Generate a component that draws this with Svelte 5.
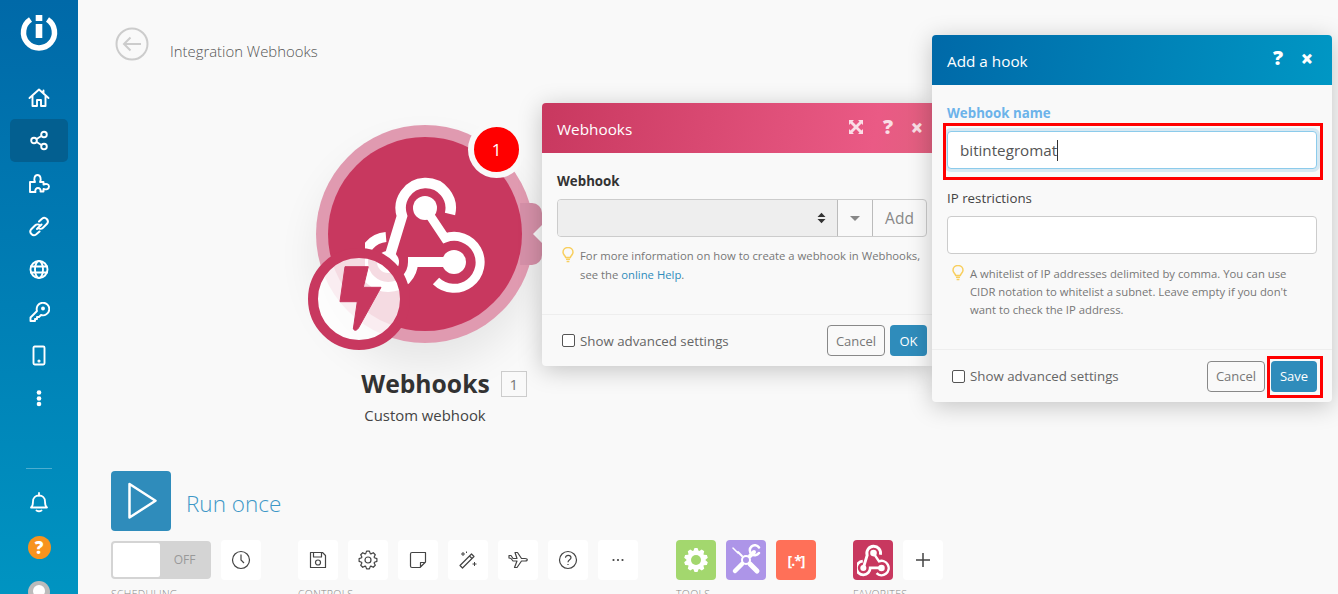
<script>
  const navItems = ['home', 'share', 'puzzle', 'link', 'globe', 'key', 'phone', 'more']

  function gearPath(cx, cy, outer, inner, teeth) {
    const pts = []
    const step = (Math.PI * 2) / teeth
    for (let i = 0; i < teeth; i++) {
      const a = i * step
      const w = step * 0.2
      pts.push([a - step / 2 + w * 0.3, inner], [a - w, outer], [a + w, outer], [a + step / 2 - w * 0.3, inner])
    }
    return 'M' + pts.map(([a, r]) => `${(cx + Math.sin(a) * r).toFixed(2)} ${(cy - Math.cos(a) * r).toFixed(2)}`).join('L') + 'Z'
  }

  const controls = ['save', 'gear', 'note', 'wand', 'plane', 'help', 'dots']
</script>

<svelte:head>
  <title>Integration Webhooks</title>
</svelte:head>

<svg class="defs" width="0" height="0" aria-hidden="true">
  <symbol id="webhook" viewBox="0 0 120 120">
    <g fill="none" stroke="currentColor">
      <path d="M85 39A25 25 0 1 0 37 41L23 87" stroke-width="10.500" />
      <path d="M71 106A26 26 0 1 0 80 63L60 33" stroke-width="9" />
      <path d="M21 62A25 25 0 1 0 48 87H89" stroke-width="10" />
    </g>
    <circle cx="60" cy="33" r="12" fill="currentColor" />
    <circle cx="89" cy="87" r="12" fill="currentColor" />
    <circle cx="23" cy="87" r="11" fill="currentColor" />
  </symbol>
  <symbol id="bulb" viewBox="0 0 12 16">
    <path d="M3.700 10.500C3.400 8.800 1 7.800 1 5.200A5 4.700 0 0 1 11 5.200C11 7.800 8.600 8.800 8.300 10.500Z" fill="none" stroke="#f8cf5f" stroke-width="1.500" />
    <path d="M4 12.300H8M4.600 14.500H7.400" stroke="#f8cf5f" stroke-width="1.500" />
  </symbol>
</svg>

<div class="page">
  <nav class="sidebar">
    <div class="logo">
      <svg width="40" height="40" viewBox="0 0 40 40">
        <path d="M11.500 6.500A15.500 15.500 0 1 0 28.500 6.500" fill="none" stroke="#fff" stroke-width="5.500" />
        <rect x="16.700" y="2" width="6.600" height="6" fill="#fff" />
        <rect x="16.700" y="11" width="6.600" height="14" fill="#fff" />
      </svg>
    </div>
    <ul class="nav">
      {#each navItems as item}
        <li class:active={item === 'share'}>
          <svg width="22" height="22" viewBox="0 0 22 22" fill="none" stroke="#fff" stroke-width="1.900" stroke-linejoin="round" stroke-linecap="round">
            {#if item === 'home'}
              <path d="M1.500 11 11 2.500l9.500 8.500M4.500 9V19H9V13H13V19H17.500V9M15.500 3.500V6" />
            {:else if item === 'share'}
              <circle cx="16" cy="4.500" r="2.800" /><circle cx="6" cy="10.500" r="2.800" /><circle cx="16" cy="16.500" r="2.800" />
              <path d="M8.600 9 13.400 6M8.600 12 13.400 15" />
            {:else if item === 'puzzle'}
              <path d="M2 19V9H7C5.500 6.500 6.500 2 9.500 2S13.500 6.500 12 9H15.500V11.500C18 10.500 21 11 21 13.500S18 17 15.500 16V18.500H12.500C13 16 11.500 15 10 15S6.500 16.500 7.500 19Z" />
            {:else if item === 'link'}
              <path d="M9 13 13.500 8.500M11 5.500 14 2.700A3.600 3.600 0 0 1 19 7.800L15 11.800A3.600 3.600 0 0 1 10 11.800M11.500 15.500 8 18.500A3.600 3.600 0 0 1 3 13.500L7 9.500A3.600 3.600 0 0 1 12 9.500" stroke-width="2" />
            {:else if item === 'globe'}
              <circle cx="11" cy="10.500" r="8.500" /><ellipse cx="11" cy="10.500" rx="4" ry="8.500" /><path d="M3 7.500H19M3 13.500H19" />
            {:else if item === 'key'}
              <path d="M9 9A6.300 6.300 0 1 1 13 13L11 15H9V17H7V19H2.500V15.500Z" /><circle cx="15" cy="6.500" r="1" />
            {:else if item === 'phone'}
              <rect x="5.500" y="1.500" width="11" height="18" rx="1.200" /><circle cx="11" cy="16" r=".6" />
            {:else}
              <circle cx="11" cy="4.500" r="2.300" fill="#fff" stroke="none" /><circle cx="11" cy="10.500" r="2.300" fill="#fff" stroke="none" /><circle cx="11" cy="16" r="2.300" fill="#fff" stroke="none" />
            {/if}
          </svg>
        </li>
      {/each}
    </ul>
    <div class="nav-bottom">
      <hr />
      <svg class="bell" width="20" height="22" viewBox="0 0 20 22" fill="none" stroke="#fff" stroke-width="1.800" stroke-linejoin="round">
        <path d="M2 16.500C4 15 4 13 4 10.500C4 7 6.500 4.500 10 4.500S16 7 16 10.500C16 13 16 15 18 16.500Z" />
        <path d="M10 2V4.500M7.500 19.500Q10 21 12.500 19.500" stroke-linecap="round" />
      </svg>
      <div class="help-dot">?</div>
      <div class="avatar"><span></span></div>
    </div>
  </nav>

  <main class="canvas">
    <header class="crumb">
      <svg width="34" height="34" viewBox="0 0 34 34" fill="none" stroke="#ccc" stroke-width="2">
        <circle cx="17" cy="17" r="15.500" /><path d="M26 17H9M15.500 10.500 9 17l6.500 6.500" />
      </svg>
      <span>Integration Webhooks</span>
    </header>

    <section class="module">
      <div class="bubble">
        <div class="notch"></div>
        <div class="disc">
          <svg class="hook" width="120" height="120"><use href="#webhook" /></svg>
        </div>
        <div class="count">1</div>
        <div class="trigger">
          <svg width="104" height="104" viewBox="0 0 104 104">
            <circle cx="52" cy="52" r="46" fill="rgba(255,255,255,.82)" stroke="#c8385f" stroke-width="10" />
            <path d="M38 19.700H61.300L56.300 40.300H74L51.300 81.300Q48.500 85 46.300 82L50.300 54.700H33Z" fill="#c8385f" stroke="#c8385f" stroke-linejoin="round" stroke-width="1" />
          </svg>
        </div>
      </div>
      <h2>Webhooks <span class="idx">1</span></h2>
      <p>Custom webhook</p>
    </section>

    <section class="toolbar">
      <div class="run">
        <button class="run-btn" aria-label="Run once">
          <svg width="32" height="40" viewBox="0 0 32 40" fill="none" stroke="#fff" stroke-width="2.500" stroke-linejoin="round">
            <path d="M3.500 3V36.500L29.500 19.700Z" />
          </svg>
        </button>
        <span>Run once</span>
      </div>
      <div class="groups">
        <div class="group sched">
          <div class="row">
            <div class="toggle"><i></i><span>OFF</span></div>
            <button class="tool" aria-label="Schedule">
              <svg width="20" height="20" viewBox="0 0 20 20" fill="none" stroke="#444" stroke-width="1.200"><circle cx="10" cy="10" r="8.500" /><path d="M10 4.500V10L13 13" /></svg>
            </button>
          </div>
          <small>SCHEDULING</small>
        </div>
        <div class="group ctrl">
          <div class="row">
            {#each controls as c}
              <button class="tool" aria-label={c}>
                <svg width="20" height="20" viewBox="0 0 20 20" fill="none" stroke="#444" stroke-width="1.200" stroke-linejoin="round">
                  {#if c === 'save'}
                    <path d="M2.500 2.500H14.500L17.500 5.500V17.500H2.500Z" /><path d="M5.500 2.500V7H13.500V2.500" /><circle cx="10" cy="12.500" r="2.500" />
                  {:else if c === 'gear'}
                    <path d={gearPath(10, 10, 9, 6.800, 8)} /><circle cx="10" cy="10" r="3" />
                  {:else if c === 'note'}
                    <path d="M2.500 4Q2.500 2.500 4 2.500H17.500V12L12 17.500H4Q2.500 17.500 2.500 16ZM17.500 12.500H12.500V17.500" />
                  {:else if c === 'wand'}
                    <path d="M2 15.500 13.500 4 16 6.500 4.500 18ZM11.500 6 14 8.500" /><path d="M5 2V6M3 4H7M16.500 12V16M14.500 14H18.500M8.500 1.500V3" stroke-width="1" />
                  {:else if c === 'plane'}
                    <path d="M1 8 3 8.500 5 11 9 11 6.500 17.500H9L13.500 11H17C20 11 20 8.500 17 8.500H13.500L9.500 2.500H7L9 8.500H5L3 5.500H1Z" />
                  {:else if c === 'help'}
                    <circle cx="10" cy="10" r="8.500" /><path d="M7.500 7.800C7.500 4.500 13 4.800 13 7.800C13 9.800 10 9.800 10 12.200M10 14V15" />
                  {:else}
                    <circle cx="5.500" cy="10" r=".5" /><circle cx="10" cy="10" r=".5" /><circle cx="14.500" cy="10" r=".5" />
                  {/if}
                </svg>
              </button>
            {/each}
          </div>
          <small>CONTROLS</small>
        </div>
        <div class="group tools">
          <div class="row">
            <button class="tool green" aria-label="Flow control">
              <svg width="24" height="24" viewBox="0 0 24 24"><path d={gearPath(12, 12, 12, 9.500, 10)} fill="#fff" /><circle cx="12" cy="12" r="5" fill="#a3d76e" /></svg>
            </button>
            <button class="tool purple" aria-label="Tools">
              <svg width="32" height="32" viewBox="0 0 32 32" fill="none" stroke="#fff" stroke-linecap="round">
                <path d="M8 8 12 12" stroke-width="2" /><path d="M20 20 27 27" stroke-width="5" /><path d="M12 20 5 27" stroke-width="4.500" /><path d="M20 12 24 8" stroke-width="4" />
                <path d="M3 4 8 9" stroke-width="1.500" /><path d="M29 3.500A5 5 0 1 0 29 9" stroke-width="2.500" />
                <circle cx="16" cy="16" r="4" stroke-width="2" />
              </svg>
            </button>
            <button class="tool orange">[.*]</button>
          </div>
          <small>TOOLS</small>
        </div>
        <div class="group favs">
          <div class="row">
            <button class="tool crimson" aria-label="Webhooks"><svg width="33" height="33"><use href="#webhook" /></svg></button>
            <button class="tool" aria-label="Add">
              <svg width="16" height="16" viewBox="0 0 16 16" stroke="#444" stroke-width="1.500"><path d="M8 1V15M1 8H15" /></svg>
            </button>
          </div>
          <small>FAVORITES</small>
        </div>
      </div>
    </section>
  </main>

  <div class="dialog first">
    <div class="dlg-head rose">
      <span>Webhooks</span>
      <div class="dlg-icons">
        <svg class="expand" width="14" height="14" viewBox="0 0 14 14" fill="#fff"><path d="M0 0H5L3.500 1.500 7 5 10.500 1.500 9 0H14V5L12.500 3.500 9 7 12.500 10.500 14 9V14H9L10.500 12.500 7 9 3.500 12.500 5 14H0V9L1.500 10.500 5 7 1.500 3.500 0 5Z" /></svg>
        <b class="q">?</b>
        <b class="x">×</b>
      </div>
    </div>
    <div class="dlg-body">
      <span class="label strong">Webhook</span>
      <div class="select-group">
        <div class="sel"><svg width="9" height="12" viewBox="0 0 9 12" fill="#333"><path d="M.5 5 4.500.8 8.500 5ZM.5 7 4.500 11.200 8.500 7Z" /></svg></div>
        <div class="caret"><i></i></div>
        <div class="add">Add</div>
      </div>
      <div class="hint">
        <svg width="12" height="16"><use href="#bulb" /></svg>
        <p>For more information on how to create a webhook in Webhooks, see the <a href="#help">online Help</a>.</p>
      </div>
    </div>
    <div class="dlg-foot">
      <label class="adv"><i class="box"></i>Show advanced settings</label>
      <div class="btns"><button class="btn">Cancel</button><button class="btn primary ok">OK</button></div>
    </div>
  </div>

  <div class="dialog second">
    <div class="dlg-head blue">
      <span>Add a hook</span>
      <div class="dlg-icons">
        <b class="q">?</b>
        <b class="x">×</b>
      </div>
    </div>
    <div class="dlg-body">
      <span class="label strong sky">Webhook name</span>
      <div class="field focus">
        <div class="input on">bitintegromat<i class="cursor"></i></div>
        <div class="mark name"></div>
      </div>
      <span class="label">IP restrictions</span>
      <div class="input"></div>
      <div class="hint">
        <svg width="12" height="16"><use href="#bulb" /></svg>
        <p>A whitelist of IP addresses delimited by comma. You can use CIDR notation to whitelist a subnet. Leave empty if you don't want to check the IP address.</p>
      </div>
    </div>
    <div class="dlg-foot">
      <label class="adv"><i class="box"></i>Show advanced settings</label>
      <div class="btns">
        <button class="btn">Cancel</button>
        <button class="btn primary save">Save<span class="mark savebox"></span></button>
      </div>
    </div>
  </div>
</div>

<style>
  :global(body) {
    margin: 0;
    background: #f9f9f9;
    font-family: "Open Sans", sans-serif;
    overflow: hidden;
  }

  .defs { position: absolute; }

  .page {
    position: relative;
    display: flex;
    width: 1338px;
    height: 594px;
    overflow: hidden;
    color: #333;
  }

  .sidebar {
    flex: 0 0 78px;
    height: 610px;
    background: linear-gradient(#0069a8, #0095c2);
    display: flex;
    flex-direction: column;
    align-items: center;
  }

  .logo { height: 76px; padding-top: 13px; box-sizing: border-box; }
  .logo svg { display: block; }

  .nav {
    list-style: none;
    margin: 0;
    padding: 0;
    width: 58px;
  }
  .nav li {
    height: 43px;
    display: flex;
    align-items: center;
    justify-content: center;
    border-radius: 5px;
  }
  .nav li.active { background: #035f90; }

  .nav-bottom {
    margin-top: 48px;
    display: flex;
    flex-direction: column;
    align-items: center;
  }
  hr {
    width: 26px;
    height: 1px;
    border: 0;
    margin: 0 0 22px;
    background: rgba(255, 255, 255, .3);
  }
  .bell { display: block; }
  .help-dot {
    width: 23px;
    height: 23px;
    margin-top: 23px;
    border-radius: 50%;
    background: #f7931e;
    color: #fff;
    font: 800 17px/23px "Open Sans", sans-serif;
    text-align: center;
  }
  .avatar {
    width: 22px;
    height: 22px;
    margin-top: 22px;
    border-radius: 50%;
    background: #bbb;
    display: flex;
    justify-content: center;
  }
  .avatar span {
    width: 12px;
    height: 12px;
    margin-top: 4px;
    background: #fff;
    border-radius: 50%;
  }

  .canvas {
    flex: 1;
    min-width: 0;
    display: flex;
    flex-direction: column;
    padding-left: 33px;
  }

  .crumb {
    display: flex;
    align-items: center;
    gap: 21px;
    padding: 27px 0 0 4px;
    height: 34px;
    font-size: 14.900px;
    font-weight: 300;
    color: #555;
  }
  .crumb span { padding-top: 14px; }

  .module {
    width: 240px;
    margin: 64px 0 0 194px;
    text-align: center;
  }
  .module h2 {
    margin: 25px 0 0;
    font-size: 24.700px;
    line-height: 32px;
    font-weight: 700;
    color: #333;
    display: flex;
    justify-content: center;
    align-items: center;
    gap: 11px;
    padding-left: 38px;
    white-space: nowrap;
  }
  .idx {
    width: 24px;
    height: 24px;
    border: 1.500px solid #ccc;
    font-size: 15px;
    font-weight: 400;
    line-height: 24px;
    color: #777;
  }
  .module p { margin: 5px 0 0; font-size: 14.900px; line-height: 20px; color: #444; }

  .bubble {
    position: relative;
    width: 218px;
    height: 218px;
    margin-left: 11px;
    border-radius: 50%;
    background: #e09ab0;
    box-shadow: 0 22px 40px rgba(0, 0, 0, .08);
    box-sizing: border-box;
    padding: 12px;
  }
  .disc {
    width: 194px;
    height: 194px;
    border-radius: 50%;
    background: #c8385f;
    color: #fff;
    position: relative;
  }
  .hook { position: absolute; left: 37px; top: 38px; }
  .notch {
    position: absolute;
    left: 204px;
    top: 78px;
    width: 22px;
    height: 62px;
    background: #d590a8;
    border-radius: 0 10px 10px 0;
  }
  .notch::after {
    content: "";
    position: absolute;
    right: 0;
    top: 22px;
    border: 9px solid transparent;
    border-right-color: #f9f9f9;
    border-left-width: 0;
  }
  .count {
    position: absolute;
    left: 152px;
    top: -4px;
    width: 45px;
    height: 45px;
    border: 6px solid #f9f9f9;
    border-radius: 50%;
    background: #f00;
    color: #fff;
    font-size: 17px;
    line-height: 45px;
    text-align: center;
  }
  .trigger { position: absolute; left: -9px; top: 122px; height: 104px; }
  .trigger svg { display: block; }

  .toolbar {
    margin-top: 46px;
  }
  .run {
    display: flex;
    align-items: center;
    gap: 15px;
    height: 60px;
  }
  .run-btn {
    width: 60px;
    height: 60px;
    padding: 0 0 0 2px;
    border: 0;
    border-radius: 4px;
    background: #2f8cbb;
    display: flex;
    align-items: center;
    justify-content: center;
  }
  .run span {
    padding-top: 4px;
    font-size: 22.500px;
    font-weight: 300;
    color: #3c97c7;
  }

  .groups {
    display: flex;
    margin-top: 9px;
  }
  .group small {
    display: block;
    margin-top: 7px;
    font-size: 10.500px;
    line-height: 14px;
    font-weight: 300;
    letter-spacing: .3px;
    color: #888;
  }
  .row { display: flex; gap: 10px; }
  .sched { width: 187px; }
  .ctrl { width: 378px; }
  .tools { width: 177px; }

  .toggle {
    width: 100px;
    height: 38px;
    margin-top: 1px;
    box-sizing: border-box;
    border: 2px solid #d4d4d4;
    border-radius: 4px;
    background: #d4d4d4;
    display: flex;
  }
  .toggle i { width: 47px; background: #fff; border-radius: 2px; }
  .toggle span {
    flex: 1;
    font-size: 12px;
    line-height: 34px;
    text-align: center;
    color: #999;
  }
  .tool {
    width: 40px;
    height: 40px;
    padding: 0;
    border: 0;
    border-radius: 4px;
    background: #fff;
    display: flex;
    align-items: center;
    justify-content: center;
  }
  .green { background: #a3d76e; }
  .purple { background: #ad95e8; }
  .orange {
    background: #ff7058;
    color: #fff;
    font: 700 14px "Open Sans", sans-serif;
    letter-spacing: -1px;
  }
  .crimson { background: #c8385f; color: #fff; }

  .dialog {
    position: absolute;
    background: #f9f9f9;
    border-radius: 4px;
    box-shadow: 0 4px 24px rgba(0, 0, 0, .22);
    display: flex;
    flex-direction: column;
  }
  .first { left: 542px; top: 103px; width: 390px; height: 263px; border-radius: 4px 0 0 4px; }
  .second { left: 932px; top: 35px; width: 400px; height: 367px; }

  .dlg-head {
    flex: 0 0 50px;
    display: flex;
    align-items: center;
    justify-content: space-between;
    padding: 2px 18px 0 15px;
    box-sizing: border-box;
    color: #fff;
    font-size: 15.300px;
    border-radius: 4px 4px 0 0;
  }
  .rose { background: linear-gradient(100deg, #c8385f, #ea5a85 85%, #e0607f); border-radius: 4px 0 0 0; padding-right: 8px; }
  .blue { background: linear-gradient(100deg, #0069a8, #0097c4); }
  .dlg-icons { display: flex; align-items: center; gap: 16px; }
  .dlg-icons b { display: block; font-weight: 800; line-height: 20px; text-align: center; }
  .q { font-size: 20px; width: 12px; }
  .x { font-size: 22px; width: 14px; }
  .expand { margin-right: 3px; }
  .rose .dlg-icons { opacity: .8; margin-top: -4px; }
  .blue .dlg-icons { margin-top: -6px; }

  .dlg-body { flex: 1; padding: 0 15px; display: flex; flex-direction: column; align-items: stretch; }
  .first .dlg-body { padding-right: 5px; }
  .label { display: block; font-size: 13.300px; line-height: 18px; color: #444; }
  .strong { font-weight: 700; color: #333; margin-top: 19px; }
  .sky { color: #6cb3ea; }

  .select-group {
    display: flex;
    height: 38px;
    margin-top: 9px;
    box-sizing: border-box;
    border: 1px solid #ccc;
    border-radius: 4px;
    overflow: hidden;
  }
  .sel {
    flex: 0 0 280px;
    background: #eee;
    border-right: 1px solid #bbb;
    box-sizing: border-box;
    display: flex;
    align-items: center;
    justify-content: flex-end;
    padding-right: 11px;
  }
  .caret {
    flex: 0 0 35px;
    border-right: 1px solid #bbb;
    box-sizing: border-box;
    display: flex;
    align-items: center;
    justify-content: center;
  }
  .caret i {
    border: 5px solid transparent;
    border-top-color: #888;
    border-bottom-width: 0;
  }
  .add { flex: 1; font-size: 15.500px; line-height: 36px; text-align: center; color: #888; }

  .hint { display: flex; gap: 6px; margin-top: 9px; padding-left: 5px; }
  .second .hint { margin-top: 10px; padding-right: 22px; }
  .hint svg { flex: none; margin-top: 1px; }
  .hint p {
    margin: 1px 0 0;
    font-size: 11.300px;
    line-height: 18px;
    color: #777;
  }
  .first .hint p { line-height: 18.500px; }
  .hint a { color: #2f8cbb; text-decoration: none; }

  .dlg-foot {
    flex: 0 0 52px;
    box-sizing: border-box;
    border-top: 1px solid #eee;
    display: flex;
    align-items: center;
    justify-content: space-between;
    padding: 0 5px 0 20px;
    font-size: 13.300px;
  }
  .second .dlg-foot { padding: 0 15px 0 20px; flex-basis: 53px; }
  .adv { display: flex; align-items: center; gap: 5px; color: #666; }
  .box {
    width: 11px;
    height: 11px;
    border: 1px solid #555;
    border-radius: 2px;
    background: #fff;
  }
  .btns { display: flex; gap: 5px; }
  .btn {
    height: 31px;
    padding: 0;
    box-sizing: border-box;
    width: 58px;
    border: 1px solid #888;
    border-radius: 4px;
    background: #f9f9f9;
    color: #777;
    font: 13px "Open Sans", sans-serif;
  }
  .primary {
    position: relative;
    border: 0;
    background: #2f8cbb;
    color: #fff;
    width: 37px;
  }
  .save { width: 46px; margin-left: 1px; }

  .field { position: relative; margin: 9px 0 20px; }
  .input {
    height: 38px;
    box-sizing: border-box;
    border: 1px solid #ccc;
    border-radius: 4px;
    background: #fff;
    padding-left: 12px;
    font-size: 15.200px;
    line-height: 36px;
    color: #555;
    margin-top: 9px;
  }
  .input.on {
    margin: 0;
    border-color: #8ccbeb;
    box-shadow: 0 0 0 3px #d6e8f2;
  }
  .cursor {
    display: inline-block;
    width: 1px;
    height: 21px;
    background: #333;
    vertical-align: -5px;
  }
  .mark { position: absolute; border: 3px solid #f00; box-sizing: border-box; pointer-events: none; }
  .mark.name { left: -4px; top: -8px; width: 380px; height: 57px; }
  .mark.savebox { left: -4px; top: -5px; width: 56px; height: 42px; }
</style>
